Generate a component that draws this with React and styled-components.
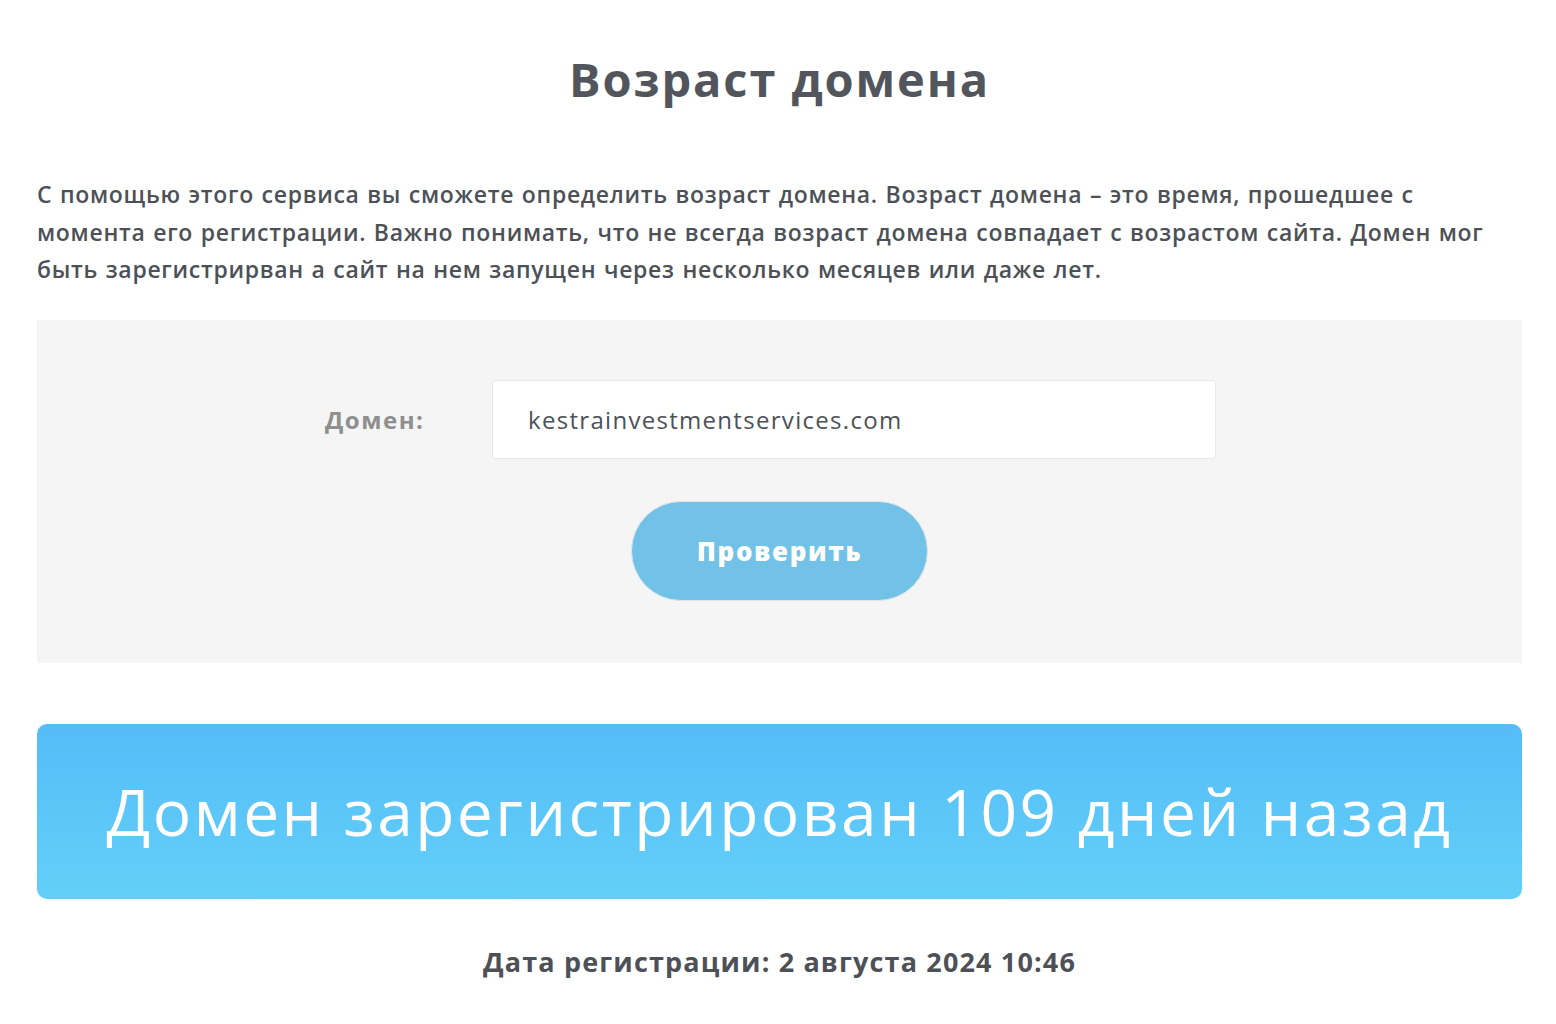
import styled, { createGlobalStyle } from "styled-components";

const Global = createGlobalStyle`
  body {
    margin: 0;
    background: #fff;
    font-family: "Open Sans", "Noto Sans", sans-serif;
    color: #4d5157;
  }
`

const Page = styled.div`
  width: 1485px;
  margin-left: 37px;
  padding-top: 51px;
`

const Title = styled.h1`
  margin: 0;
  text-align: center;
  font-size: 47px;
  font-weight: 700;
  line-height: 56px;
  color: #52565c;
  letter-spacing: 1.9px;
`

const Intro = styled.p`
  margin: 69px 0 0;
  font-size: 23px;
  font-weight: 600;
  line-height: 37.5px;
  color: #4d5157;
  letter-spacing: 0.7px;
  word-spacing: 1px;
  white-space: nowrap;
`

const FormBox = styled.div`
  margin-top: 31px;
  background: #f4f5f4;
  height: 343px;
  box-sizing: border-box;
  padding-top: 60px;
  display: flex;
  flex-direction: column;
  align-items: center;
`

const FieldRow = styled.div`
  display: flex;
  align-items: center;
  width: 891px;
  margin-left: -18px;
`

const Label = styled.label`
  width: 167px;
  font-size: 24px;
  font-weight: 700;
  color: #8e8f8f;
  letter-spacing: 1.5px;
`

const Input = styled.div`
  flex: 1;
  height: 79px;
  box-sizing: border-box;
  background: #fff;
  border: 1px solid #e6e7e7;
  border-radius: 3px;
  padding-left: 35px;
  display: flex;
  align-items: center;
  font-size: 24px;
  font-weight: 500;
  color: #4d5157;
  letter-spacing: 1.3px;
`

const Button = styled.button`
  margin-top: 42px;
  width: 297px;
  height: 100px;
  border-radius: 50px;
  border: 1px solid #dde6ea;
  background: #72c1e6;
  color: #fff;
  font-family: "Open Sans", sans-serif;
  font-size: 26px;
  font-weight: 800;
  letter-spacing: 1.6px;
`

const Banner = styled.div`
  margin-top: 61px;
  height: 175px;
  border-radius: 10px;
  background: linear-gradient(180deg, #55bcf8 0%, #63d0f8 100%);
  display: flex;
  align-items: center;
  justify-content: center;
  color: #fff;
  font-size: 64px;
  font-weight: 400;
  letter-spacing: 2.5px;
`

const DateLine = styled.div`
  margin-top: 44px;
  text-align: center;
  font-size: 27px;
  font-weight: 700;
  color: #4d5157;
  letter-spacing: 1.15px;
`

export default function App() {
  return (
    <>
      <Global />
      <Page>
        <Title>Возраст домена</Title>
        <Intro>
          С помощью этого сервиса вы сможете определить возраст домена. Возраст домена – это время, прошедшее с<br />
          моментa его регистрации. Важно понимать, что не всегда возраст домена совпадает с возрастом сайта. Домен мог<br />
          быть зарегистрирван а сайт на нем запущен через несколько месяцев или даже лет.
        </Intro>
        <FormBox>
          <FieldRow>
            <Label>Домен:</Label>
            <Input>kestrainvestmentservices.com</Input>
          </FieldRow>
          <Button>Проверить</Button>
        </FormBox>
        <Banner>Домен зарегистрирован 109 дней назад</Banner>
        <DateLine>Дата регистрации: 2 августа 2024 10:46</DateLine>
      </Page>
    </>
  )
}
